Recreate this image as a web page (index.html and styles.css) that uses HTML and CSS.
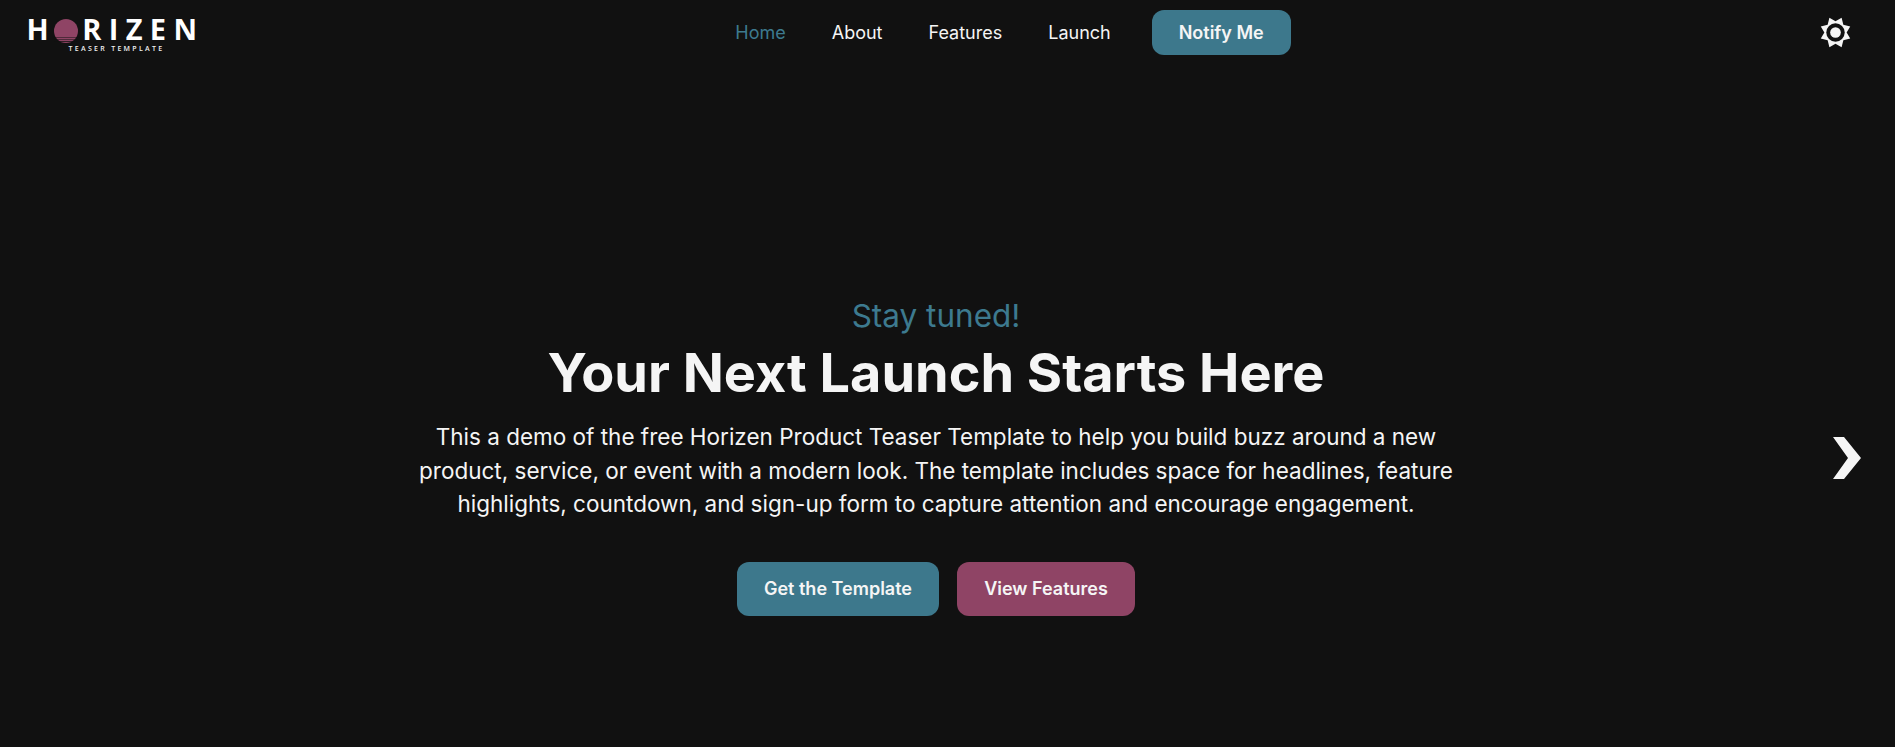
FILE: index.html
```html
<!DOCTYPE html>
<html lang="en">
<head>
<meta charset="utf-8">
<title>Horizen Teaser Template</title>
<link rel="stylesheet" href="styles.css">
</head>
<body>
<div class="page">
  <header class="navbar">
    <a class="logo" href="#">
      <span class="logo-main"><span>H</span><svg class="logo-sun" viewBox="0 0 24 24" aria-hidden="true"><circle cx="12" cy="12" r="12" fill="#8f4465"/><path fill="#111111" d="M0 18.400h24v.5H0zM0 20.400h24v.7H0zM0 22.300h24v.8H0z"/></svg><span>RIZEN</span></span>
      <span class="logo-sub">TEASER TEMPLATE</span>
    </a>
    <nav class="menu">
      <a class="menu-link is-active" href="#">Home</a>
      <a class="menu-link" href="#">About</a>
      <a class="menu-link" href="#">Features</a>
      <a class="menu-link" href="#">Launch</a>
      <a class="btn btn-nav" href="#">Notify Me</a>
    </nav>
    <svg class="gear" viewBox="0 0 32 32" aria-hidden="true">
      <path fill="#f5f5f5" d="M22.300.8l1.800 7.100 7.100 1.800-3.700 6.300 3.700 6.300-7.100 1.800-1.800 7.100-6.300-3.700-6.300 3.700-1.800-7.100-7.100-1.800L4.500 16 .8 9.700l7.100-1.800L9.700.8 16 4.500z"/>
      <circle cx="16" cy="16" r="9.500" fill="#111111"/>
      <circle cx="16" cy="16" r="5.500" fill="#f5f5f5"/>
    </svg>
  </header>
  <main class="hero">
    <section class="hero-copy">
      <p class="eyebrow">Stay tuned!</p>
      <h1 class="title">Your Next Launch Starts Here</h1>
      <p class="lead">This a demo of the free Horizen Product Teaser Template to help you build buzz around a new product, service, or event with a modern look. The template includes space for headlines, feature highlights, countdown, and sign-up form to capture attention and encourage engagement.</p>
      <div class="actions">
        <a class="btn btn-primary" href="#">Get the Template</a>
        <a class="btn btn-secondary" href="#">View Features</a>
      </div>
    </section>
    <svg class="next" viewBox="0 0 28 42" aria-hidden="true"><path fill="#f5f5f5" d="M0 0h11l17 21-17 21H0l15-21z"/></svg>
  </main>
</div>
</body>
</html>
```
FILE: styles.css
```css
* { box-sizing: border-box; }
html, body { margin: 0; height: 100%; }
body {
  background: #111111;
  color: #f5f5f5;
  font-family: "Inter", "Liberation Sans", sans-serif;
  overflow: hidden;
}
a { text-decoration: none; color: inherit; }
.page { height: 747px; display: flex; flex-direction: column; }
.navbar {
  height: 65px;
  flex: none;
  position: relative;
  display: flex;
  align-items: center;
  justify-content: center;
  padding-left: 131px;
}
.logo {
  position: absolute;
  left: 29px;
  top: 16px;
  display: flex;
  flex-direction: column;
  align-items: center;
  width: 167px;
}
.logo-main {
  display: flex;
  align-items: center;
  font-family: "Open Sans", "Liberation Sans", sans-serif;
  font-weight: 700;
  font-size: 29px;
  line-height: 26px;
  letter-spacing: 7.400px;
  height: 26px;
  margin-left: 6px;
  color: #ffffff;
  white-space: nowrap;
}
.logo-sun { width: 24px; height: 24px; margin: 4px 4px 0 -2px; flex: none; }
.logo-sub {
  font-family: "Open Sans", "Liberation Sans", sans-serif;
  font-weight: 600;
  font-size: 7px;
  line-height: 9px;
  letter-spacing: 2.300px;
  margin: 2px 0 0 8px;
  color: #f0f0f0;
  white-space: nowrap;
}
.menu { display: flex; align-items: center; gap: 46px; font-size: 18px; }
.menu-link { color: #f5f5f5; }
.menu-link.is-active { color: #3d7a8f; }
.btn {
  display: inline-flex;
  align-items: center;
  justify-content: center;
  font-weight: 600;
  color: #f5f5f5;
  border-radius: 12px;
}
.btn-nav {
  width: 139px;
  height: 45px;
  margin-left: -5px;
  background: #3d788c;
  font-size: 18px;
}
.gear { position: absolute; left: 1820px; top: 17px; width: 31px; height: 31px; }
.hero {
  flex: 1;
  position: relative;
  display: flex;
  justify-content: center;
  padding: 232px 23px 0 0;
}
.hero-copy { width: 1050px; text-align: center; }
.eyebrow { margin: 0; font-size: 31.500px; line-height: 38px; color: #3d7a8f; }
.title { margin: 4px 0 0; font-size: 54px; line-height: 68px; font-weight: 700; color: #f5f5f5; }
.lead { margin: 13px 0 0; font-size: 22.500px; line-height: 33.600px; color: #f5f5f5; }
.actions { display: flex; justify-content: center; gap: 18px; margin-top: 41px; }
.btn-primary, .btn-secondary { height: 54px; font-size: 18px; }
.btn-primary { width: 202px; background: #3d788c; }
.btn-secondary { width: 178px; background: #8f4465; }
.next { position: absolute; left: 1833px; top: 372px; width: 28px; height: 42px; }
```
